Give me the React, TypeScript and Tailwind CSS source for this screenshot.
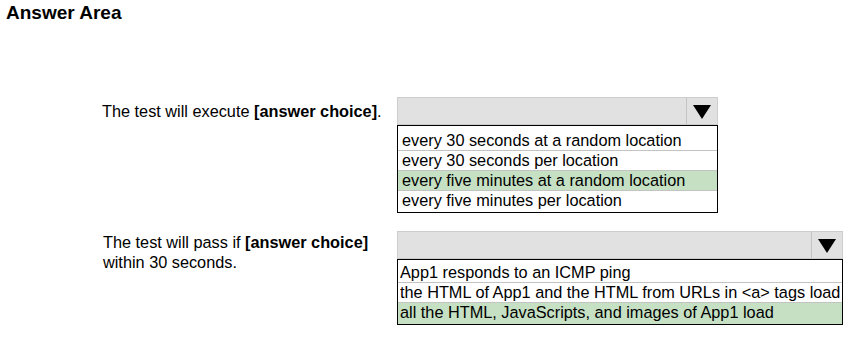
import React from "react";

function Arrow() {
  return (
    <svg width="18" height="14" viewBox="0 0 18 14" className="block">
      <polygon points="0,0 18,0 9,14" fill="#000" />
    </svg>
  );
}

function Select({ width }: { width: string }) {
  return (
    <div className={`flex h-[28px] ${width} border border-[#cdcdcd] bg-[#e1e1e1]`}>
      <div className="flex-1" />
      <div className="flex w-[31px] items-center justify-center border-l border-[#c4c4c4] pt-[1px]">
        <Arrow />
      </div>
    </div>
  );
}

export default function App() {
  const list1 = [
    "every 30 seconds at a random location",
    "every 30 seconds per location",
    "every five minutes at a random location",
    "every five minutes per location",
  ];
  const list2 = [
    "App1 responds to an ICMP ping",
    "the HTML of App1 and the HTML from URLs in <a> tags load",
    "all the HTML, JavaScripts, and images of App1 load",
  ];
  return (
    <div
      className="w-[853px] h-[339px] bg-white text-black overflow-hidden"
      style={{ fontFamily: '"Liberation Sans", Arial, sans-serif' }}
    >
      <div className="pl-[6px] pt-[2px] text-[19px] font-bold leading-[22px]">Answer Area</div>

      {/* Section 1 */}
      <div className="mt-[73px] flex pl-[102px]">
        <div className="w-[295px] pt-[4px] text-[16.3px] leading-[20px]">
          The test will execute <span className="font-bold">[answer choice]</span>.
        </div>
        <div className="w-[321px]">
          <Select width="w-[321px]" />
          <div className="border border-black pt-[5px] pb-[2px] text-[16.3px] leading-[19px]">
            {list1.map((t, i) => (
              <div
                key={i}
                className={`h-[19px] px-[4px] whitespace-nowrap ${i > 0 ? "border-t border-[#c3c3c3] h-[20px]" : ""} ${
                  i === 2 ? "bg-[#c6e0c4]" : ""
                }`}
              >
                {t}
              </div>
            ))}
          </div>
        </div>
      </div>

      {/* Section 2 */}
      <div className="mt-[18px] flex pl-[102px]">
        <div className="w-[295px] pt-[1px] pl-[1px] text-[16.3px] leading-[20px]">
          The test will pass if <span className="font-bold">[answer choice]</span>
          <br />
          within 30 seconds.
        </div>
        <div className="w-[446px]">
          <Select width="w-[446px]" />
          <div className="border border-black pt-[3px] text-[16.3px] leading-[19px]">
            {list2.map((t, i) => (
              <div
                key={i}
                className={`px-[2px] whitespace-nowrap ${i > 0 ? "border-t border-[#c3c3c3]" : ""} ${
                  i === 2 ? "bg-[#c6e0c4] h-[22px]" : i === 0 ? "h-[19px]" : "h-[20px]"
                }`}
              >
                {t}
              </div>
            ))}
          </div>
        </div>
      </div>
    </div>
  );
}
